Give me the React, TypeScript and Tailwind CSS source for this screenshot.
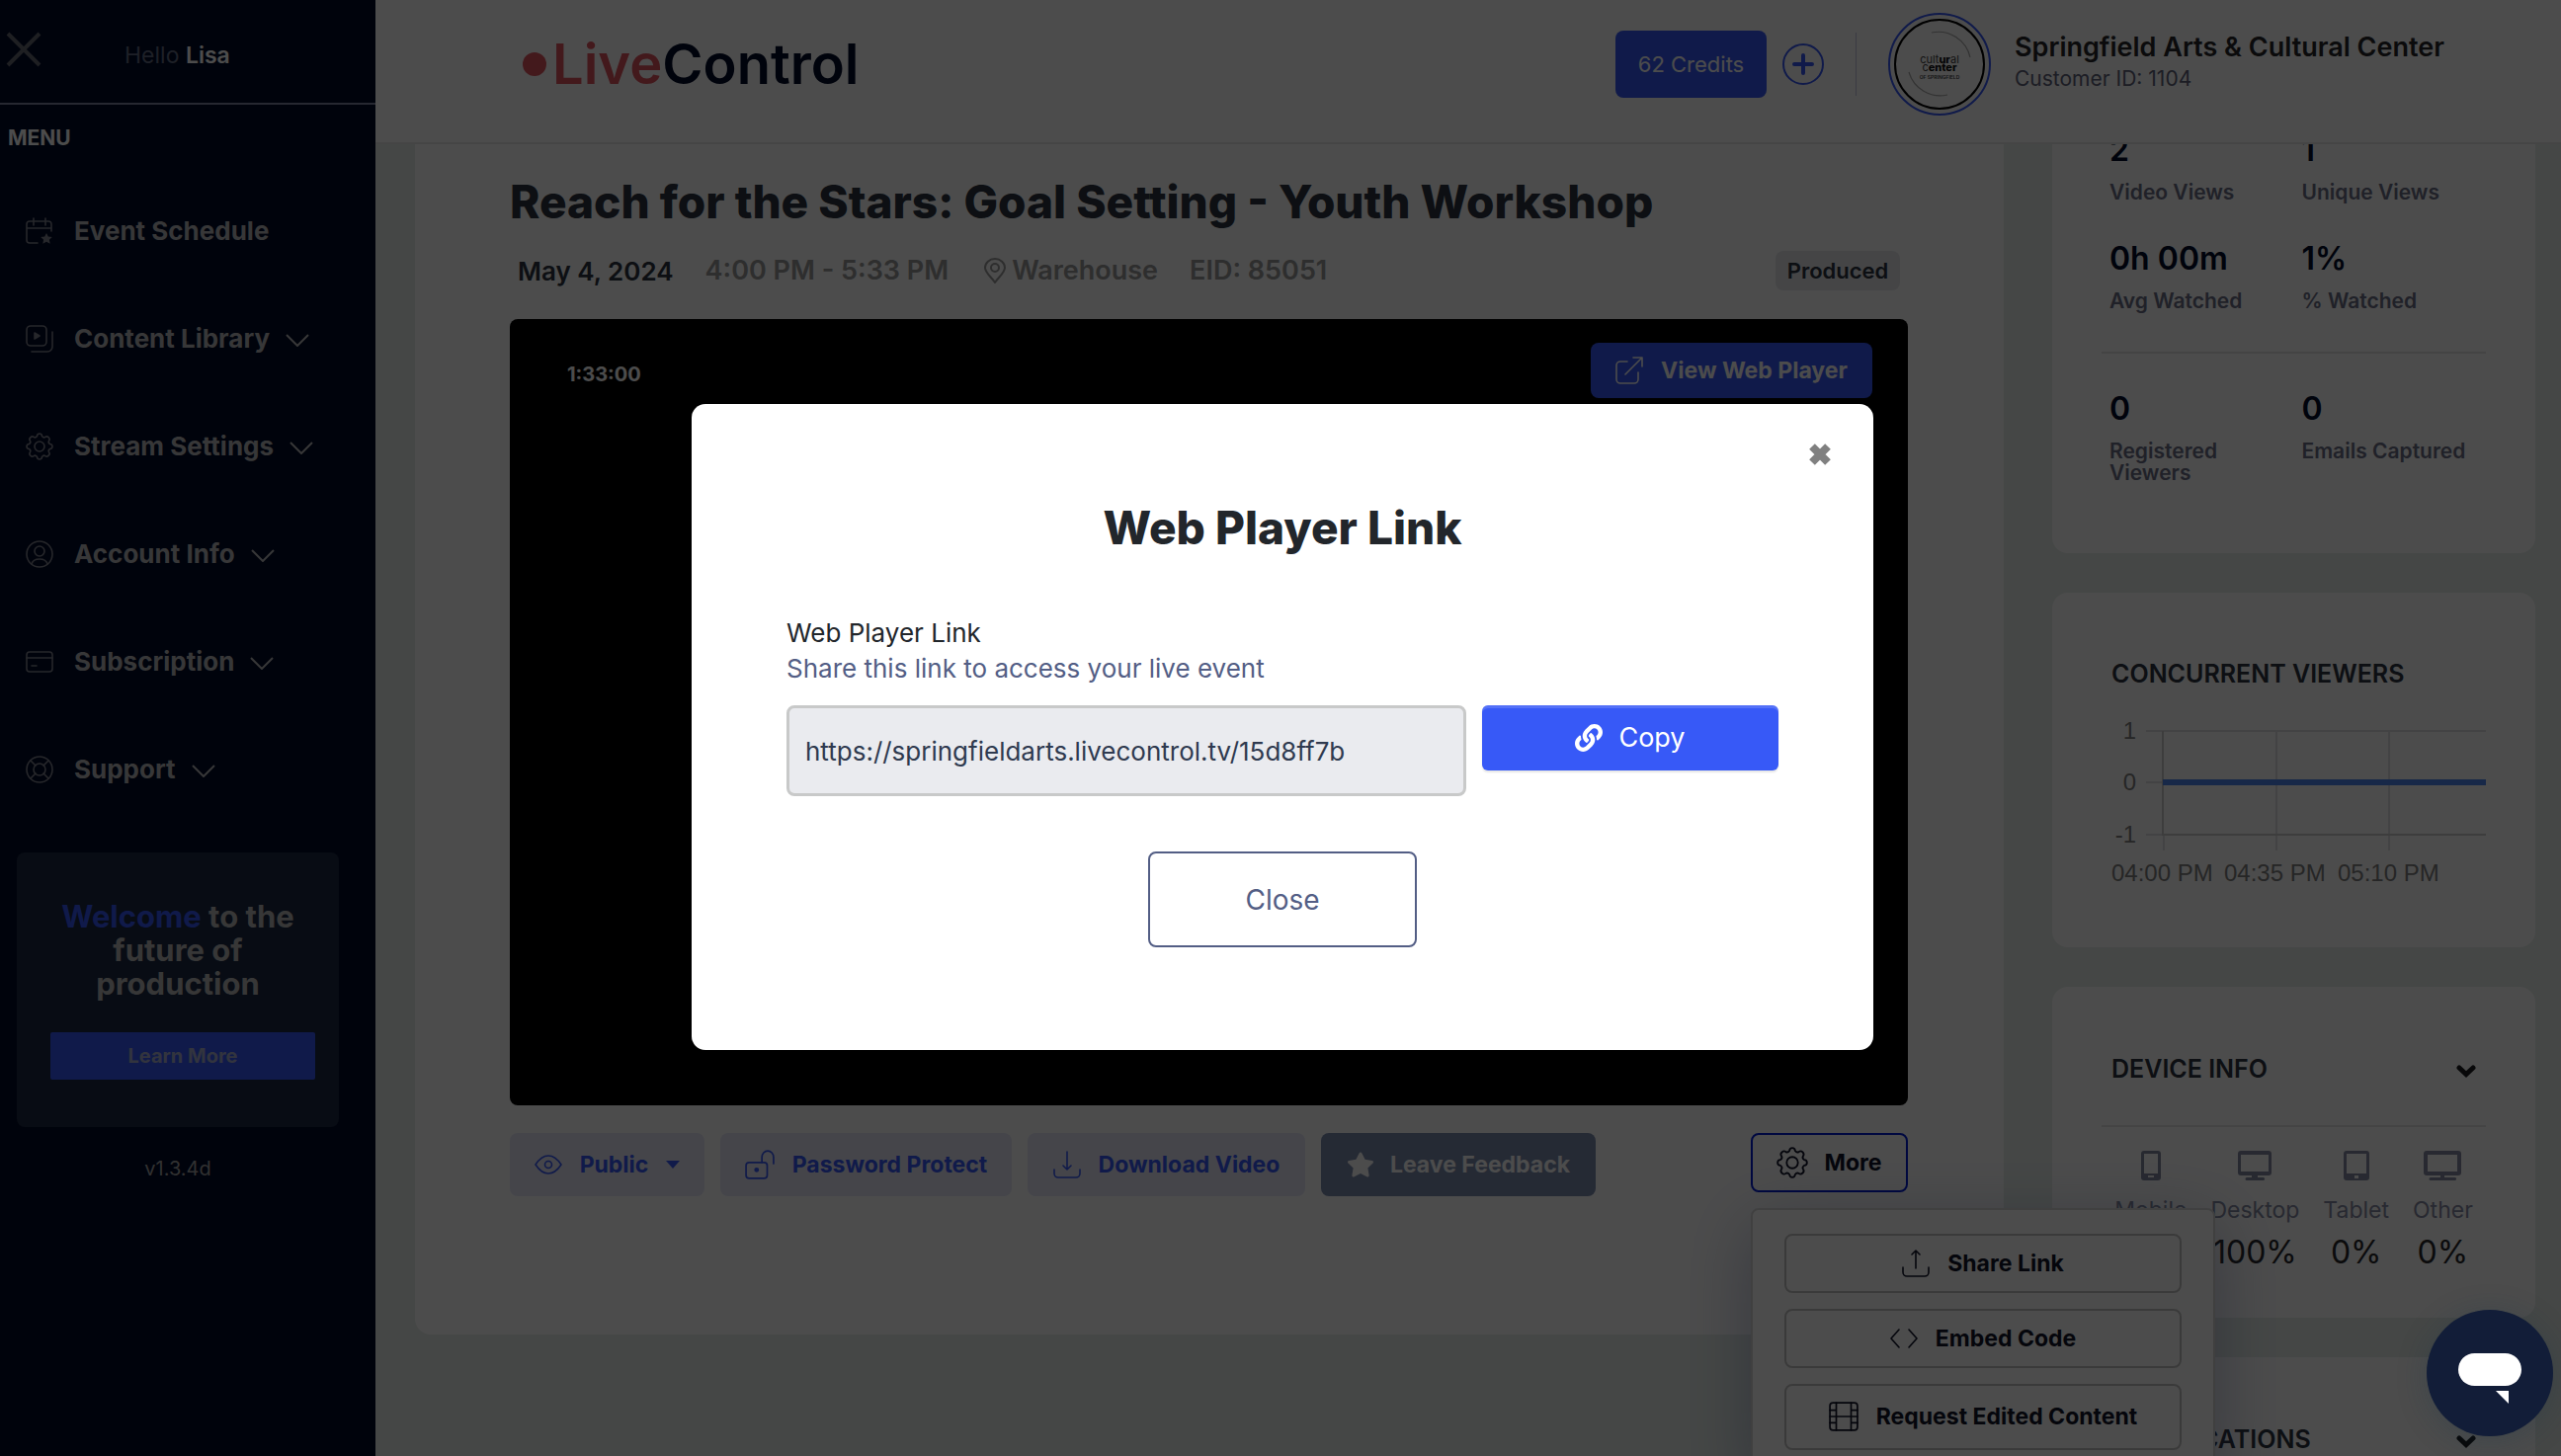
import { useState } from 'react'
import type { ReactNode } from 'react'
import { FaLink, FaStar } from 'react-icons/fa'

const NAV: { label: string; icon: ReactNode; expandable: boolean }[] = [
  {
    label: 'Event Schedule',
    expandable: false,
    icon: (
      <>
        <path d="M12 26H4a3 3 0 0 1-3-3V7a3 3 0 0 1 3-3h19a3 3 0 0 1 3 3v7M1 11h25M8 1v7M20 1v7" />
        <path d="m21 16 1.8 3.6 4 .5-2.9 2.7.8 4-3.7-2-3.7 2 .8-4-2.9-2.7 4-.5z" fill="currentColor" stroke="none" />
      </>
    ),
  },
  {
    label: 'Content Library',
    expandable: true,
    icon: (
      <>
        <rect x="1" y="1" width="20" height="20" rx="4" />
        <path d="M27 7v15a5 5 0 0 1-5 5H6" />
        <path d="m9 8 5 3-5 3z" fill="currentColor" />
      </>
    ),
  },
  { label: 'Stream Settings', expandable: true, icon: <GearPaths /> },
  {
    label: 'Account Info',
    expandable: true,
    icon: (
      <>
        <circle cx="14" cy="14" r="13" />
        <circle cx="14" cy="11" r="5" />
        <path d="M6 24c1-4 4-5 8-5s7 1 8 5" />
      </>
    ),
  },
  {
    label: 'Subscription',
    expandable: true,
    icon: (
      <>
        <rect x="1" y="4" width="26" height="20" rx="3" />
        <path d="M1 10h26M6 18h5" />
      </>
    ),
  },
  {
    label: 'Support',
    expandable: true,
    icon: (
      <>
        <circle cx="14" cy="14" r="13" />
        <circle cx="14" cy="14" r="6" />
        <path d="m5 5 5 5M23 5l-5 5M5 23l5-5M23 23l-5-5" />
      </>
    ),
  },
]

const DEVICES: { name: string; value: string; width: number; icon: ReactNode }[] = [
  {
    name: 'Mobile',
    value: '0%',
    width: 20,
    icon: <path fillRule="evenodd" d="M3 0h14a3 3 0 0 1 3 3v24a3 3 0 0 1-3 3H3a3 3 0 0 1-3-3V3a3 3 0 0 1 3-3zm0 3v20h14V3zm4 22v2h6v-2z" />,
  },
  {
    name: 'Desktop',
    value: '100%',
    width: 34,
    icon: <path fillRule="evenodd" d="M3 0h28a3 3 0 0 1 3 3v19a3 3 0 0 1-3 3H20v2h5a1 1 0 0 1 1 3H9a1 1 0 0 1 0-3h5v-2H3a3 3 0 0 1-3-3V3a3 3 0 0 1 3-3zm0 4v17h28V4z" />,
  },
  {
    name: 'Tablet',
    value: '0%',
    width: 26,
    icon: <path fillRule="evenodd" d="M3 0h20a3 3 0 0 1 3 3v24a3 3 0 0 1-3 3H3a3 3 0 0 1-3-3V3a3 3 0 0 1 3-3zm0 3v20h20V3zm8 22v3h4v-3z" />,
  },
  {
    name: 'Other',
    value: '0%',
    width: 38,
    icon: <path fillRule="evenodd" d="M3 0h32a3 3 0 0 1 3 3v19a3 3 0 0 1-3 3H21v2h10a1 1 0 0 1 1 3H7a1 1 0 0 1 0-3h10v-2H3a3 3 0 0 1-3-3V3a3 3 0 0 1 3-3zm1 4v17h30V4z" />,
  },
]

function GearPaths() {
  return (
    <>
      <circle cx="14" cy="14" r="5" />
      <path d="M11.5 3.5Q11.700 1 14 1T16.500 3.500Q18 5.500 19.700 4.500 21.500 3 23.200 4.800T23.500 8.300Q22.500 10 24.500 11.500 27 11.700 27 14T24.500 16.500Q22.500 18 23.500 19.700 25 21.500 23.200 23.200T19.700 23.500Q18 22.500 16.500 24.500 16.300 27 14 27T11.500 24.500Q10 22.500 8.300 23.500 6.500 25 4.800 23.200T4.500 19.700Q5.500 18 3.500 16.500 1 16.300 1 14T3.500 11.500Q5.500 10 4.500 8.300 3 6.500 4.800 4.800T8.300 4.500Q10 5.500 11.500 3.500z" />
    </>
  )
}

function LineIcon({ children, className = 'size-7' }: { children: ReactNode; className?: string }) {
  return (
    <svg viewBox="0 0 28 28" className={`shrink-0 ${className}`} fill="none" stroke="currentColor" strokeWidth="1.6" strokeLinecap="round" strokeLinejoin="round" aria-hidden="true">
      {children}
    </svg>
  )
}

function CardChevron() {
  return (
    <svg viewBox="0 0 20 13" className="mt-1 mr-2.5 w-5 text-[#1c1d20]" fill="none" stroke="currentColor" strokeWidth="5" strokeLinecap="round" aria-hidden="true">
      <path d="m3 3 7 6.500L17 3" />
    </svg>
  )
}

function Sidebar() {
  return (
    <aside className="w-[380px] shrink-0 bg-[#000a28]">
      <div className="flex h-[106px] items-center border-b-2 border-[#8088a4] pl-1.5">
        <button aria-label="Close menu" className="mb-1 text-[#666a74]">
          <svg viewBox="0 0 36 36" className="size-9" fill="none" stroke="currentColor" strokeWidth="4"><path d="m2 2 32 32M34 2 2 34" /></svg>
        </button>
        <p className="mt-2 ml-[84px] text-[23px] leading-8 text-[#646b84]">Hello <b className="font-semibold text-white">Lisa</b></p>
      </div>
      <h2 className="h-[73px] pt-5 pl-2 text-[21px] leading-7 font-bold text-white">MENU</h2>
      <nav>
        {NAV.map(n => (
          <a key={n.label} href="#" className="flex h-[109px] items-center pl-[26px] text-[#b8b9bc]">
            <LineIcon className="size-7 text-[#80838f]">{n.icon}</LineIcon>
            <span className="ml-[21px] text-[26px] font-bold">{n.label}</span>
            {n.expandable && (
              <svg viewBox="0 0 24 13" className="mt-1 ml-4 w-6" fill="none" stroke="currentColor" strokeWidth="2"><path d="m1 1 11 11L23 1" /></svg>
            )}
          </a>
        ))}
      </nav>
      <div className="mt-[30px] mr-[37px] ml-[17px] rounded-lg bg-[#1b2843] pt-12 pr-6 pb-12 pl-[34px] text-center">
        <p className="pr-2.5 text-[31px] leading-[34px] font-bold text-[#b8b8b8]">
          <span className="text-[#3759f7]">Welcome</span> to the<br />future of<br />production
        </p>
        <button className="mt-8 h-12 w-full rounded-xs bg-[#3759f7] text-[20px] font-bold text-[#a9b0d0]">Learn More</button>
      </div>
      <p className="mt-[26px] mr-[37px] ml-[17px] text-center text-[20px] leading-8 text-[#a5a5a5]">v1.3.4d</p>
    </aside>
  )
}

function Header() {
  return (
    <header className="relative z-10 flex h-[146px] items-center border-b-2 border-[#e8e8e8] bg-white pb-3.5 pl-[149px]">
      <a href="#" className="flex items-center gap-1.5 text-[56px] leading-none font-semibold">
        <span className="size-6 rounded-full bg-[#e05560]" />
        <span><span className="text-[#e05560]">Live</span><span className="text-[#000a28]">Control</span></span>
      </a>
      <div className="ml-auto flex items-center">
        <button className="h-[68px] w-[153px] rounded-lg bg-[#3759f7] text-[22px] text-white">62 Credits</button>
        <button aria-label="Add credits" className="ml-4 text-[#3759f7]">
          <svg viewBox="0 0 42 42" className="size-[42px]" fill="none" stroke="currentColor"><circle cx="21" cy="21" r="20" strokeWidth="2" /><path d="M21 12v18M12 21h18" strokeWidth="4" strokeLinecap="round" /></svg>
        </button>
        <span className="mx-8 h-16 w-px bg-[#c3c6e0]" />
        <svg viewBox="0 0 104 104" className="size-[104px]" fill="none" fontFamily="Inter, sans-serif" textAnchor="middle" aria-hidden="true">
          <circle cx="52" cy="52" r="51" stroke="#3759f7" strokeWidth="2" />
          <circle cx="52" cy="52" r="45" stroke="#000" strokeWidth="2" />
          <path d="M44 20A33 33 0 0 1 83 45M21 60A33 33 0 0 0 60 83" stroke="#aaa" strokeWidth="1.200" />
          <text x="52" y="51" fontSize="11" fill="#444">cult<tspan fontWeight="800" fill="#111">ur</tspan>al</text>
          <text x="52" y="59" fontSize="11" fill="#444">c<tspan fontWeight="800" fill="#111">enter</tspan></text>
          <text x="52" y="67" fontSize="5" fontWeight="600" fill="#444">OF SPRINGFIELD</text>
        </svg>
        <div className="mb-1.5 ml-6 w-[553px]">
          <p className="text-[27px] leading-9 font-semibold text-[#26272b]">Springfield Arts &amp; Cultural Center</p>
          <p className="text-[21px] leading-7 text-[#5e627a]">Customer ID: 1104</p>
        </div>
      </div>
    </header>
  )
}

function MoreMenu() {
  const item = 'flex w-full items-center justify-center gap-[18px] rounded-lg border-2 border-[#c4c4c4] text-[23px] font-bold'
  return (
    <div className="absolute top-[76px] left-0 z-10 flex w-[470px] flex-col gap-4 rounded-lg border-2 border-[#d8d8d8] bg-white px-8 py-6 text-[#11142a] shadow-[0_16px_70px_rgba(50,65,130,0.35)]">
      <button className={`${item} h-[60px]`}>
        <LineIcon><path d="M14 19V1M10 5l4-4 4 4M1 18v5a4 4 0 0 0 4 4h18a4 4 0 0 0 4-4v-5" /></LineIcon>
        Share Link
      </button>
      <button className={`${item} h-[60px]`}>
        <LineIcon><path d="m9 5-8 9 8 9M19 5l8 9-8 9" /></LineIcon>
        Embed Code
      </button>
      <button className={`${item} h-[67px]`}>
        <LineIcon className="size-[30px]"><rect x="1" y="1" width="26" height="26" rx="3" /><path d="M7 1v26M21 1v26M7 14h14M1 8h6M1 14h6M1 20h6M21 8h6M21 14h6M21 20h6" /></LineIcon>
        Request Edited Content
      </button>
    </div>
  )
}

function EventCard() {
  const soft = 'flex h-16 items-center justify-center gap-[18px] rounded-lg bg-[#e6e8f9] text-[23px] font-bold text-[#3759f7]'
  return (
    <section className="relative z-[1] min-w-0 flex-1 self-start rounded-2xl bg-white pt-[70px] pr-[97px] pb-[140px] pl-24">
      <h1 className="text-[46px] leading-[56px] font-extrabold whitespace-nowrap text-[#2c3440]">Reach for the Stars: Goal Setting - Youth Workshop</h1>
      <div className="mt-[22px] flex h-10 items-center pl-2 text-[27px] font-semibold whitespace-nowrap text-[#999]">
        <span className="text-[26px] text-[#2c3440]">May 4, 2024</span>
        <span className="ml-8">4:00 PM - 5:33 PM</span>
        <svg viewBox="0 0 22 26" className="ml-9 w-[22px]" fill="none" stroke="currentColor" strokeWidth="2"><path d="M11 25C7 19 1 15 1 10a10 9 0 0 1 20 0c0 5-6 9-10 15z" /><circle cx="11" cy="10" r="4" /></svg>
        <span className="ml-1.5">Warehouse</span>
        <span className="ml-8">EID: 85051</span>
        <span className="mr-2 ml-auto flex h-10 w-[126px] items-center justify-center rounded-lg bg-[#e6e8ec] text-[22px] text-[#2c3440]">Produced</span>
      </div>
      <div className="mt-[29px] flex aspect-video items-start justify-between rounded-lg bg-black pt-6 pr-9 pl-[58px]">
        <span className="mt-[18px] text-[20px] leading-7 font-bold text-white">1:33:00</span>
        <button className="flex h-14 w-[285px] items-center justify-center gap-[18px] rounded-lg bg-[#3759f7] text-[23px] font-bold text-white">
          <LineIcon><path d="M12 5H5a4 4 0 0 0-4 4v14a4 4 0 0 0 4 4h14a4 4 0 0 0 4-4v-7M10 18 27 1M18 1h9v9" /></LineIcon>
          View Web Player
        </button>
      </div>
      <div className="mt-7 flex items-start gap-4 whitespace-nowrap">
        <button className={`${soft} w-[197px]`}>
          <LineIcon><path d="M1 14c4-6 8-9 13-9s9 3 13 9c-4 6-8 9-13 9s-9-3-13-9z" /><circle cx="14" cy="14" r="3.500" /></LineIcon>
          Public
          <svg viewBox="0 0 14 8" className="w-3.5" fill="currentColor"><path d="M0 0h14L7 8z" /></svg>
        </button>
        <button className={`${soft} w-[295px]`}>
          <LineIcon className="size-[30px]"><rect x="1" y="12" width="20" height="15" rx="3" /><path d="M16 12V7a5.500 6 0 0 1 11 0v6" /><circle cx="11" cy="19" r="1.500" fill="currentColor" /></LineIcon>
          Password Protect
        </button>
        <button className={`${soft} w-[281px]`}>
          <LineIcon><path d="M14 1v18M10 15l4 4 4-4M1 19v4a4 4 0 0 0 4 4h18a4 4 0 0 0 4-4v-4" /></LineIcon>
          Download Video
        </button>
        <button className="flex h-16 w-[278px] items-center justify-center gap-4 rounded-lg bg-[#7d8cb0] text-[23px] font-bold text-white">
          <FaStar className="size-7" />
          Leave Feedback
        </button>
        <div className="relative ml-auto">
          <button className="flex h-[60px] w-[159px] items-center justify-center gap-4 rounded-lg border-2 border-[#001bd5] text-[23px] font-bold text-[#11142a]">
            <LineIcon className="size-8"><GearPaths /></LineIcon>
            More
          </button>
          <MoreMenu />
        </div>
      </div>
    </section>
  )
}

function Stat({ value, label }: { value: string; label: string }) {
  return (
    <div className="pl-2">
      <p className="text-[32px] leading-10 font-semibold text-[#000a28]">{value}</p>
      <p className="mt-3 w-[180px] text-[21px] leading-[22px] font-semibold text-[#6b7088]">{label}</p>
    </div>
  )
}

function ViewersChart() {
  return (
    <svg viewBox="0 0 389 180" className="mt-[23px] w-full" fill="none" strokeWidth="2" fontFamily="Liberation Sans, Arial, sans-serif" fontSize="24">
      <path d="M45 19h344M45 71h17M45 124h344M63 124v16M177 19v121M291 19v121" stroke="#e0e0e4" />
      <path d="M62 19v105h327" stroke="#cdcdcd" />
      <path d="M62 71h327" stroke="#4f86f0" strokeWidth="6" />
      <g fill="#808080">
        <text x="35" y="27" textAnchor="end">1</text>
        <text x="35" y="79" textAnchor="end">0</text>
        <text x="35" y="132" textAnchor="end">-1</text>
        <text x="10" y="171">04:00 PM</text>
        <text x="124" y="171">04:35 PM</text>
        <text x="239" y="171">05:10 PM</text>
      </g>
    </svg>
  )
}

function StatsColumn() {
  const card = 'rounded-2xl bg-white px-[50px]'
  const title = 'px-2.5 text-[25px] leading-8 font-semibold text-[#2c3440]'
  return (
    <div className="flex w-[489px] shrink-0 flex-col gap-10">
      <section className={`${card} pt-[26px] pb-[70px]`}>
        <div className="grid grid-cols-2 gap-y-9 border-b-2 border-[#e3e3e3] pb-10">
          <Stat value="2" label="Video Views" />
          <Stat value="1" label="Unique Views" />
          <Stat value="0h 00m" label="Avg Watched" />
          <Stat value="1%" label="% Watched" />
        </div>
        <div className="grid grid-cols-2 pt-9">
          <Stat value="0" label="Registered Viewers" />
          <Stat value="0" label="Emails Captured" />
        </div>
      </section>
      <section className={`${card} pt-[66px] pb-[58px]`}>
        <h2 className={title}>CONCURRENT VIEWERS</h2>
        <ViewersChart />
      </section>
      <section className={`${card} pt-[67px] pb-[46px]`}>
        <div className="flex items-center justify-between border-b-2 border-[#e3e3e3] pb-[41px]">
          <h2 className={title}>DEVICE INFO</h2>
          <CardChevron />
        </div>
        <div className="flex justify-center gap-6 pt-6 text-center">
          {DEVICES.map(d => (
            <div key={d.name} className="flex flex-col items-center">
              <svg viewBox={`0 0 ${d.width} 30`} className="h-[30px] text-[#858ba3]" fill="currentColor">{d.icon}</svg>
              <span className="mt-4 text-[23px] leading-7 text-[#858ba3]">{d.name}</span>
              <span className="mt-[9px] text-[32px] leading-10 text-[#26272b]">{d.value}</span>
            </div>
          ))}
        </div>
      </section>
      <section className={`${card} pt-[67px] pb-[41px]`}>
        <div className="flex items-center justify-between">
          <h2 className={title}>TOP LOCATIONS</h2>
          <CardChevron />
        </div>
      </section>
    </div>
  )
}

function LinkModal({ onClose }: { onClose: () => void }) {
  const [url] = useState('https://springfieldarts.livecontrol.tv/15d8ff7b')
  return (
    <div className="fixed inset-0 z-20 flex items-center justify-center bg-black/70 pb-0.5 pl-1">
      <div role="dialog" aria-labelledby="link-title" className="relative w-[1196px] rounded-[14px] bg-white px-24 pt-[97px] pb-[104px]">
        <button onClick={onClose} aria-label="Dismiss" className="absolute top-10 right-[43px] text-[#808080]">
          <svg viewBox="0 0 22 22" className="size-[22px]" fill="none" stroke="currentColor" strokeWidth="8"><path d="m3 3 16 16M19 3 3 19" /></svg>
        </button>
        <h2 id="link-title" className="text-center text-[46px] leading-[56px] font-extrabold text-[#22262b]">Web Player Link</h2>
        <label htmlFor="link-url" className="mt-[61px] block text-[26px] leading-9 text-[#22262b]">
          Web Player Link
          <span className="block text-[#535e85]">Share this link to access your live event</span>
        </label>
        <div className="mt-[19px] flex items-start gap-4">
          <input id="link-url" readOnly value={url} className="h-[92px] min-w-0 flex-1 rounded-lg border-[3px] border-[#c8c9c9] bg-[#eaebef] px-4 text-[26px] text-[#2f3a4f]" />
          <button className="flex h-[66px] w-[300px] items-center justify-center gap-4 rounded-md bg-[#3759f7] text-[27px] text-white shadow-[inset_0_3px_0_rgba(255,255,255,0.15),0_2px_2px_rgba(0,0,0,0.1)]">
            <FaLink className="size-7" />
            Copy
          </button>
        </div>
        <button onClick={onClose} className="mx-auto mt-14 block h-[97px] w-[272px] rounded-lg border-2 border-[#535e85] text-[28px] text-[#535e85]">Close</button>
      </div>
    </div>
  )
}

export default function App() {
  const [open, setOpen] = useState(true)
  return (
    <div className="flex h-screen overflow-hidden bg-[#e8efeb] font-[Inter,'Liberation_Sans',sans-serif]">
      <Sidebar />
      <div className="min-w-0 flex-1">
        <Header />
        <main className="-mt-10 flex gap-[49px] pr-[26px] pl-10">
          <EventCard />
          <StatsColumn />
        </main>
      </div>
      {open && <LinkModal onClose={() => setOpen(false)} />}
      <button aria-label="Open chat" className="fixed right-2 bottom-5 z-30 flex size-32 items-center justify-center rounded-full bg-[#121d38] shadow-[0_4px_30px_rgba(18,50,70,0.25)]">
        <svg viewBox="0 0 64 52" className="mt-3 w-16" fill="#fff"><rect width="64" height="33" rx="16.500" /><path d="M38 38h13v13z" /></svg>
      </button>
    </div>
  )
}
